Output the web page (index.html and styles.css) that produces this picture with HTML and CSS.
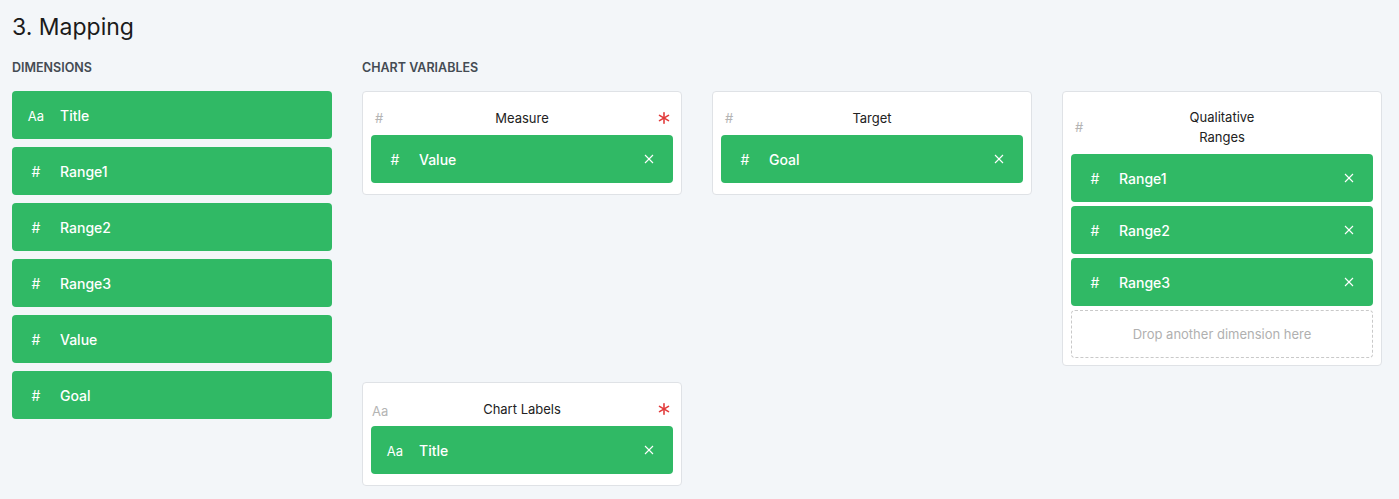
FILE: index.html
```html
<!DOCTYPE html>
<html lang="en">
<head>
<meta charset="utf-8">
<title>Mapping</title>
<link rel="stylesheet" href="styles.css">
</head>
<body>
<h2 class="page-title">3. Mapping</h2>
<div class="mapping">
  <section class="dims">
    <h6 class="section-label">Dimensions</h6>
    <div class="dim-card"><span class="dim-icon aa">Aa</span><span class="dim-name">Title</span></div>
    <div class="dim-card"><span class="dim-icon">#</span><span class="dim-name">Range1</span></div>
    <div class="dim-card"><span class="dim-icon">#</span><span class="dim-name">Range2</span></div>
    <div class="dim-card"><span class="dim-icon">#</span><span class="dim-name">Range3</span></div>
    <div class="dim-card"><span class="dim-icon">#</span><span class="dim-name">Value</span></div>
    <div class="dim-card"><span class="dim-icon">#</span><span class="dim-name">Goal</span></div>
  </section>
  <section class="vars">
    <h6 class="section-label">Chart variables</h6>
    <div class="vars-grid">
      <div class="var-box">
        <div class="var-head">
          <span class="var-type">#</span>
          <span class="var-title">Measure</span>
          <span class="req"><svg width="12" height="12" viewBox="0 0 12 12"><g stroke="#e23b3b" stroke-width="1.6" stroke-linecap="round"><line x1="6" y1="0.8" x2="6" y2="11.2"/><line x1="1.5" y1="3.4" x2="10.5" y2="8.6"/><line x1="1.5" y1="8.6" x2="10.5" y2="3.4"/></g></svg></span>
        </div>
        <div class="dim-card in-box"><span class="dim-icon">#</span><span class="dim-name">Value</span><span class="remove"><svg width="10" height="10" viewBox="0 0 10 10"><g stroke="#fff" stroke-width="1.1"><line x1="1" y1="1" x2="9" y2="9"/><line x1="9" y1="1" x2="1" y2="9"/></g></svg></span></div>
      </div>
      <div class="var-box">
        <div class="var-head">
          <span class="var-type">#</span>
          <span class="var-title">Target</span>
          <span class="req"></span>
        </div>
        <div class="dim-card in-box"><span class="dim-icon">#</span><span class="dim-name">Goal</span><span class="remove"><svg width="10" height="10" viewBox="0 0 10 10"><g stroke="#fff" stroke-width="1.1"><line x1="1" y1="1" x2="9" y2="9"/><line x1="9" y1="1" x2="1" y2="9"/></g></svg></span></div>
      </div>
      <div class="var-box">
        <div class="var-head">
          <span class="var-type">#</span>
          <span class="var-title">Qualitative Ranges</span>
          <span class="req"></span>
        </div>
        <div class="dim-card in-box"><span class="dim-icon">#</span><span class="dim-name">Range1</span><span class="remove"><svg width="10" height="10" viewBox="0 0 10 10"><g stroke="#fff" stroke-width="1.1"><line x1="1" y1="1" x2="9" y2="9"/><line x1="9" y1="1" x2="1" y2="9"/></g></svg></span></div>
        <div class="dim-card in-box"><span class="dim-icon">#</span><span class="dim-name">Range2</span><span class="remove"><svg width="10" height="10" viewBox="0 0 10 10"><g stroke="#fff" stroke-width="1.1"><line x1="1" y1="1" x2="9" y2="9"/><line x1="9" y1="1" x2="1" y2="9"/></g></svg></span></div>
        <div class="dim-card in-box"><span class="dim-icon">#</span><span class="dim-name">Range3</span><span class="remove"><svg width="10" height="10" viewBox="0 0 10 10"><g stroke="#fff" stroke-width="1.1"><line x1="1" y1="1" x2="9" y2="9"/><line x1="9" y1="1" x2="1" y2="9"/></g></svg></span></div>
        <div class="drop-zone">Drop another dimension here</div>
      </div>
      <div class="var-box">
        <div class="var-head">
          <span class="var-type aa">Aa</span>
          <span class="var-title">Chart Labels</span>
          <span class="req"><svg width="12" height="12" viewBox="0 0 12 12"><g stroke="#e23b3b" stroke-width="1.6" stroke-linecap="round"><line x1="6" y1="0.8" x2="6" y2="11.2"/><line x1="1.5" y1="3.4" x2="10.5" y2="8.6"/><line x1="1.5" y1="8.6" x2="10.5" y2="3.4"/></g></svg></span>
        </div>
        <div class="dim-card in-box"><span class="dim-icon aa">Aa</span><span class="dim-name">Title</span><span class="remove"><svg width="10" height="10" viewBox="0 0 10 10"><g stroke="#fff" stroke-width="1.1"><line x1="1" y1="1" x2="9" y2="9"/><line x1="9" y1="1" x2="1" y2="9"/></g></svg></span></div>
      </div>
    </div>
  </section>
</div>
</body>
</html>
```
FILE: styles.css
```css
* { box-sizing: border-box; }
html, body { margin: 0; }
body {
  background: #f3f6f9;
  font-family: Inter, "Noto Sans", "Liberation Sans", sans-serif;
  color: #212529;
  padding: 12px 17px 0 12px;
}
.page-title {
  margin: 0;
  font-size: 23px;
  font-weight: 400;
  line-height: 30px;
  color: #1b1b1b;
}
.mapping {
  display: grid;
  grid-template-columns: 320px 1fr;
  column-gap: 30px;
}
.section-label {
  margin: 18px 0 15px;
  font-size: 12.5px;
  line-height: 16px;
  font-weight: 600;
  text-transform: uppercase;
  color: #444b53;
}
.dim-card {
  display: flex;
  align-items: center;
  height: 48px;
  padding-left: 12px;
  background: #30b965;
  color: #fff;
  border-radius: 4px;
  margin-bottom: 8px;
}
.dim-icon {
  width: 24px;
  text-align: center;
  font-size: 14px;
  margin-right: 12px;
}
.dim-icon.aa { font-size: 13px; padding-top: 2px; }
.dim-name {
  flex: 1;
  font-size: 14px;
  font-weight: 500;
}
.remove {
  width: 10px;
  height: 10px;
  margin-right: 19px;
  display: flex;
}
.vars-grid {
  display: grid;
  grid-template-columns: repeat(3, 320px);
  column-gap: 30px;
  row-gap: 16px;
  align-items: start;
}
.var-box {
  background: #fff;
  border: 1px solid #dfe2e6;
  border-radius: 4px;
  padding: 8px 8px 7px;
}
.var-head {
  display: grid;
  grid-template-columns: 1fr 100px 1fr;
  align-items: center;
  min-height: 35px;
  padding: 7px 0;
  line-height: 20px;
}
.var-type {
  font-size: 13px;
  color: #b4b4b4;
  padding-left: 4px;
}
.var-type.aa { padding-left: 1px; line-height: 18px; margin-top: 2px; margin-bottom: -2px; }
.var-title {
  text-align: center;
  font-size: 13px;
  color: #222;
}
.req {
  display: flex;
  justify-content: flex-end;
  padding-right: 3px;
}
.dim-card.in-box { margin-bottom: 4px; }
.drop-zone {
  height: 48px;
  border: 1px dashed #c9c9c9;
  border-radius: 4px;
  display: flex;
  align-items: center;
  justify-content: center;
  font-size: 13px;
  color: #b0b0b0;
}
```
